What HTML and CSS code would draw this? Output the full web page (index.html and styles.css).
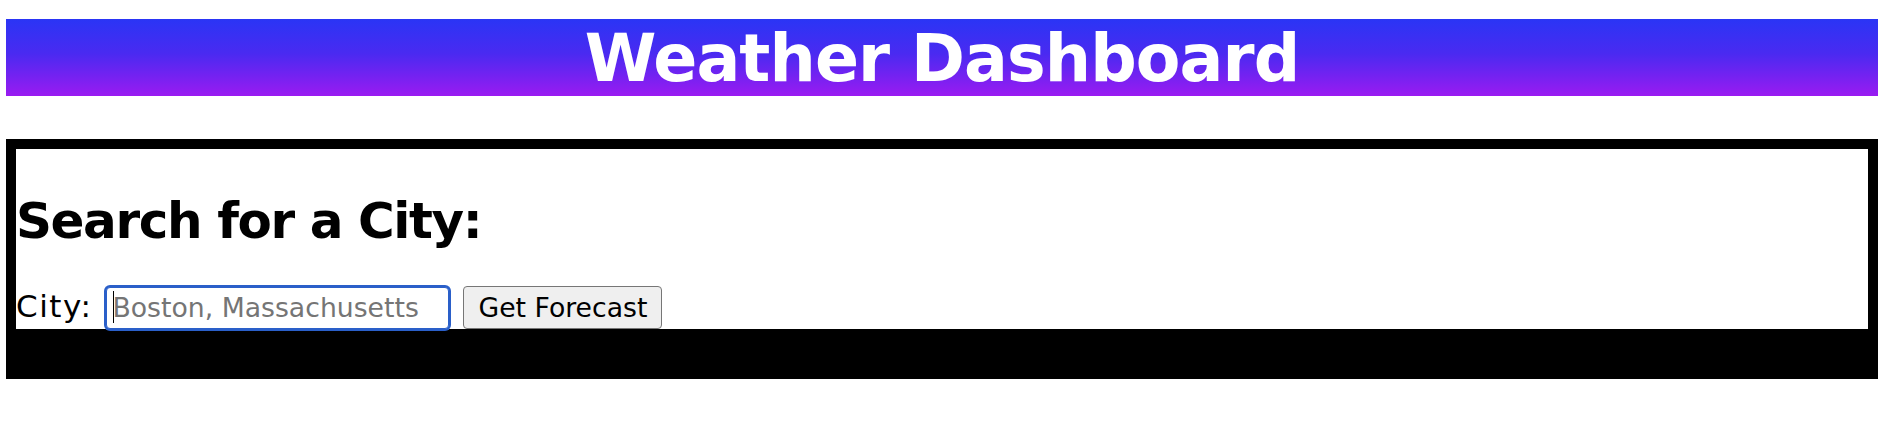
FILE: index.html
```html
<!DOCTYPE html>
<html lang="en">
<head>
<meta charset="utf-8">
<title>Weather Dashboard</title>
<link rel="stylesheet" href="styles.css">
</head>
<body>
<header class="site-header">
  <h1 class="site-title">Weather Dashboard</h1>
</header>
<section class="search-section">
  <div class="search-panel">
    <h2 class="search-title">Search for a City:</h2>
    <form class="search-form">
      <label class="city-label" for="city">City:</label>
      <span class="input-wrap">
        <input class="city-input" id="city" type="text" placeholder="Boston, Massachusetts">
        <span class="caret"></span>
      </span>
      <button class="forecast-btn" type="button">Get Forecast</button>
    </form>
  </div>
</section>
</body>
</html>
```
FILE: styles.css
```css
html, body {
  background: #ffffff;
}

body {
  margin: 19px 8px 0 6px;
  font-family: "DejaVu Sans", Verdana, sans-serif;
  color: #000000;
}

.site-header {
  background: linear-gradient(to bottom, #2a35f5 0%, #4a2af1 45%, #9a1bf1 100%);
  height: 77px;
}

.site-title {
  margin: 0;
  padding-top: 3px;
  text-align: center;
  color: #ffffff;
  font-size: 65px;
  letter-spacing: -0.9px;
  line-height: 74px;
  font-weight: bold;
}

.search-section {
  margin-top: 43px;
  border: 10px solid #000000;
  background: #000000;
  padding-bottom: 40px;
}

.search-panel {
  background: #ffffff;
  padding: 1px 0 0 0;
}

.search-title {
  margin: 42px 0 36px 0;
  font-size: 50px;
  letter-spacing: -1.4px;
  line-height: 58px;
  font-weight: bold;
}

.search-form {
  display: flex;
  align-items: baseline;
}

.city-label {
  font-size: 31px;
  letter-spacing: 1.5px;
  line-height: 35px;
  margin-right: 14px;
}

.input-wrap {
  position: relative;
  display: inline-flex;
}

.city-input {
  box-sizing: border-box;
  width: 343px;
  height: 42px;
  margin: 0;
  border: 1px solid #2a5fc9;
  border-radius: 4px;
  box-shadow: 0 0 0 2px #2a5fc9;
  padding: 0 5px;
  font-family: "DejaVu Sans", Verdana, sans-serif;
  font-size: 26.7px;
  color: #000000;
  background: #ffffff;
  outline: none;
}

.city-input::placeholder {
  color: #757575;
}

.caret {
  position: absolute;
  left: 7px;
  top: 4px;
  width: 1px;
  height: 32px;
  background: #000000;
}

.forecast-btn {
  box-sizing: border-box;
  margin-left: 14px;
  width: 199px;
  height: 43px;
  padding: 0;
  border: 1px solid #767676;
  border-radius: 4px;
  background: #efefef;
  font-family: "DejaVu Sans", Verdana, sans-serif;
  font-size: 26.7px;
  color: #000000;
}
```
